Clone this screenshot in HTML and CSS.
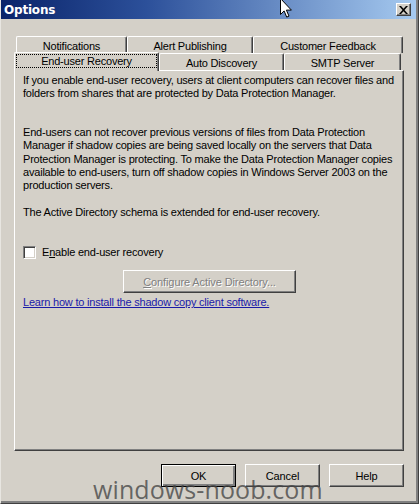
FILE: index.html
```html
<!DOCTYPE html>
<html lang="en">

<head>
    <meta charset="UTF-8">
    <title>Options</title>
    <link rel="stylesheet" href="styles.css">
</head>

<body>
    <div class="window">
        <div class="titlebar">
            <span class="title">Options</span>
            <span class="close">
                <svg width="9" height="8" viewBox="0 0 9 8">
                    <path d="M0 0h2l2.5 2.8L7 0h2L5.5 4 9 8H7L4.5 5.2 2 8H0l3.5-4z" fill="#000" />
                </svg>
            </span>
        </div>

        <div class="body">
            <div class="tabs">
                <div class="tab-row back">
                    <div class="tab t-notif">Notifications</div>
                    <div class="tab t-alert">Alert Publishing</div>
                    <div class="tab t-cust">Customer Feedback</div>
                </div>
                <div class="tab-row front">
                    <div class="tab t-user active"><span class="focus">End-user Recovery</span></div>
                    <div class="tab t-auto">Auto Discovery</div>
                    <div class="tab t-smtp">SMTP Server</div>
                </div>
            </div>

            <div class="panel">
                <p class="intro">If you enable end-user recovery, users at client computers can recover files and
                    folders from shares that are protected by Data Protection Manager.</p>
                <p class="note">End-users can not recover previous versions of files from Data Protection
                    Manager if shadow copies are being saved locally on the servers that Data
                    Protection Manager is protecting. To make the Data Protection Manager copies
                    available to end-users, turn off shadow copies in Windows Server 2003 on the
                    production servers.</p>
                <p class="schema">The Active Directory schema is extended for end-user recovery.</p>

                <label class="check">
                    <span class="box"></span>
                    <span>E<u>n</u>able end-user recovery</span>
                </label>

                <div class="configure-row">
                    <button class="btn configure" disabled><span><u>C</u>onfigure Active Directory...</span></button>
                </div>

                <a class="link" href="#">Learn how to install the shadow copy client software.</a>
            </div>

            <div class="actions">
                <button class="btn default">OK</button>
                <button class="btn">Cancel</button>
                <button class="btn">Help</button>
            </div>
        </div>

        <svg class="cursor" width="14" height="22" viewBox="0 0 14 22">
            <path d="M1.5 0.5v16l3.6-3.6 2.6 6.2 2.3-1-2.6-6h5z" fill="#fff" stroke="#000" stroke-width="1" />
        </svg>

        <div class="watermark">windows-noob.com</div>
    </div>
</body>

</html>
```

FILE: styles.css
```css
* {
    box-sizing: border-box;
}

body {
    margin: 0;
    background-color: #d4d0c8;
    font-family: 'Liberation Sans', Arial, sans-serif;
    font-size: 11px;
    letter-spacing: -0.2px;
    color: #000;
}

.window {
    position: relative;
    width: 419px;
    height: 504px;
    overflow: hidden;
    background-color: #d4d0c8;
    border-left: 1px solid #e8e6e1;
    border-right: 1px solid #404040;
    border-bottom: 1px solid #404040;
    box-shadow: inset -2px -2px 0 #808080;
}

.titlebar {
    height: 19px;
    margin-right: 2px;
    padding: 0 5px 0 3px;
    display: flex;
    align-items: center;
    justify-content: space-between;
    background: linear-gradient(to right, #0a246a 0%, #2c509a 35%, #a6caf0 100%);
}

.title {
    color: #fff;
    font-family: 'DejaVu Sans', sans-serif;
    font-weight: bold;
    font-size: 12px;
    letter-spacing: -0.2px;
}

.close {
    width: 15px;
    height: 13px;
    display: flex;
    align-items: center;
    justify-content: center;
    background-color: #d4d0c8;
    border-top: 1px solid #fff;
    border-left: 1px solid #fff;
    border-right: 1px solid #404040;
    border-bottom: 1px solid #404040;
    box-shadow: inset -1px -1px 0 #808080;
}

.body {
    padding: 17px 0 0 13px;
    width: 403px;
}

/* tabs */

.tabs {
    padding: 0 1px 0 2px;
}

.tab-row {
    display: flex;
    height: 17px;
}

.tab {
    height: 17px;
    display: flex;
    align-items: center;
    justify-content: center;
    background-color: #d4d0c8;
    border-top: 1px solid #fff;
    border-left: 1px solid #fff;
    border-right: 1px solid #404040;
    border-radius: 2px 2px 0 0;
    box-shadow: inset -1px 0 0 #808080;
    padding-top: 1px;
}

.t-notif { width: 111px; }
.t-alert { width: 126px; }
.t-cust { width: 150px; }

.t-user { width: 145px; }
.t-auto { width: 125px; }
.t-smtp { width: 117px; }

.front .t-user {
    margin-left: -2px;
}

.tab.active {
    position: relative;
    z-index: 2;
    height: 19px;
    margin-top: -1px;
    padding-top: 0;
    align-items: flex-start;
}

.focus {
    margin-top: 2px;
    width: 139px;
    text-align: center;
    line-height: 12px;
    outline: 1px dotted #000;
    outline-offset: 0;
}

/* panel */

.panel {
    position: relative;
    z-index: 1;
    height: 381px;
    padding: 3px 3px 0 8px;
    border-top: 1px solid #fff;
    border-left: 1px solid #fff;
    border-right: 1px solid #404040;
    border-bottom: 1px solid #404040;
    box-shadow: inset -1px -1px 0 #808080;
    line-height: 13.4px;
}

.panel p {
    margin: 0;
}

.note {
    margin-top: 25px !important;
}

.schema {
    margin-top: 13px !important;
}

.check {
    display: flex;
    align-items: center;
    gap: 6px;
    margin-top: 27px;
    height: 13px;
}

.box {
    width: 13px;
    height: 13px;
    background-color: #fff;
    border-top: 1px solid #808080;
    border-left: 1px solid #808080;
    border-right: 1px solid #fff;
    border-bottom: 1px solid #fff;
    box-shadow: inset 1px 1px 0 #404040, inset -1px -1px 0 #d4d0c8;
}

.configure-row {
    margin-top: 11px;
    padding-left: 100px;
}

.link {
    display: inline-block;
    margin-top: 3px;
    color: #1a1aa8;
    text-decoration: underline;
}

/* buttons */

.btn {
    width: 75px;
    height: 23px;
    padding: 0;
    font-family: inherit;
    font-size: 11px;
    letter-spacing: -0.1px;
    color: #000;
    background-color: #d4d0c8;
    border-top: 1px solid #fff;
    border-left: 1px solid #fff;
    border-right: 1px solid #404040;
    border-bottom: 1px solid #404040;
    box-shadow: inset -1px -1px 0 #808080;
}

.btn.default {
    border: 1px solid #000;
    box-shadow: inset 1px 1px 0 #fff, inset -2px -2px 0 #808080;
}

.btn.configure {
    width: 173px;
    color: #808080;
    text-shadow: 1px 1px 0 #fff;
}

.actions {
    display: flex;
    justify-content: flex-end;
    gap: 9px;
    margin-top: 13px;
}

/* overlays */

.cursor {
    position: absolute;
    left: 278px;
    top: -2px;
}

.watermark {
    position: absolute;
    left: 92px;
    top: 472px;
    font-family: 'Open Sans', sans-serif;
    font-size: 25px;
    color: rgba(70, 70, 70, 0.78);
    letter-spacing: 0.1px;
}
```
